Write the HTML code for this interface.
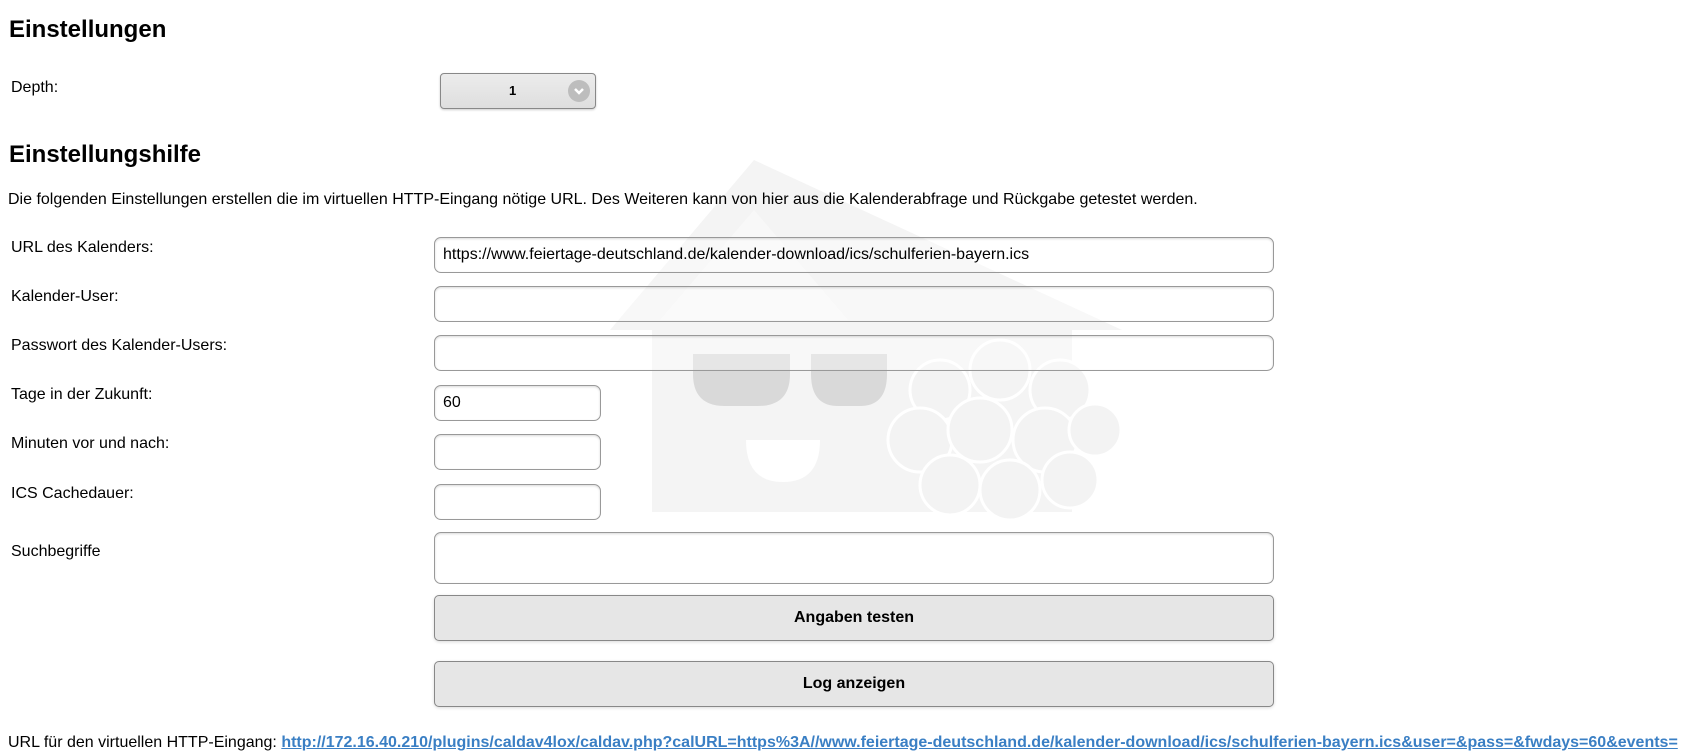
<!DOCTYPE html>
<html><head><meta charset="utf-8"><style>
html,body{margin:0;padding:0;background:#fff;width:1705px;height:753px;overflow:hidden;font-family:"Liberation Sans",Arial,sans-serif;color:#000;}
.a{position:absolute;white-space:nowrap;}
h2{margin:0;font-size:24px;font-weight:bold;position:absolute;left:9px;}
.lbl{position:absolute;left:11px;font-size:16px;line-height:20px;}
.inp{position:absolute;left:434px;width:830px;height:34px;border:1px solid #999;border-radius:7px;box-shadow:inset 0 1px 2px rgba(0,0,0,.15);background:rgba(255,255,255,.35);font-size:16px;line-height:34px;padding-left:8px;box-sizing:content-box;}
.sh{width:157px;}
.btn{position:absolute;left:434px;width:838px;height:44px;border:1px solid #888;border-radius:5px;background:#e6e6e6;box-shadow:0 1px 3px rgba(0,0,0,.15);font-weight:bold;font-size:16px;line-height:44px;text-align:center;}
</style></head><body>
<svg class="a" style="left:0;top:0" width="1705" height="753">
 <polygon points="754,160 610,330 652,330 652,512 1072,512 1072,330 1122,330" fill="#f4f4f4"/>
 <polygon points="754,210 660,320 848,320" fill="#f8f8f8"/>
 <path d="M693,354 h97 v20 q0,32 -32,32 h-33 q-32,0 -32,-32z" fill="#d9d9d9"/>
 <path d="M811,354 h76 v20 q0,32 -27,32 h-22 q-27,0 -27,-32z" fill="#d9d9d9"/>
 <path d="M746,440 h74 q0,42 -37,42 q-37,0 -37,-42z" fill="#fff"/>
 <g fill="#f3f3f3" stroke="#fff" stroke-width="3">
  <circle cx="1000" cy="370" r="30"/><circle cx="940" cy="390" r="30"/><circle cx="1060" cy="390" r="30"/>
  <circle cx="920" cy="440" r="32"/><circle cx="980" cy="430" r="32"/><circle cx="1045" cy="440" r="32"/><circle cx="1095" cy="430" r="26"/>
  <circle cx="950" cy="485" r="30"/><circle cx="1010" cy="490" r="30"/><circle cx="1070" cy="480" r="28"/>
 </g>
</svg>
<h2 style="top:16px">Einstellungen</h2>
<div class="lbl" style="top:78px">Depth:</div>
<div class="a" style="left:440px;top:73px;width:154px;height:34px;border:1px solid #888;border-radius:4px;background:linear-gradient(#ececec,#dedede);box-shadow:0 1px 2px rgba(0,0,0,.2);font-size:13px;font-weight:bold;line-height:34px;">
 <span style="position:absolute;left:68px;">1</span>
 <span style="position:absolute;right:5px;top:6px;width:22px;height:22px;border-radius:50%;background:#bdbdbd;"><svg width="22" height="22"><path d="M7,9 L11,13 L15,9" fill="none" stroke="#fff" stroke-width="2.5"/></svg></span>
</div>
<h2 style="top:141px">Einstellungshilfe</h2>
<div class="a" style="left:8px;top:190px;font-size:16px;line-height:20px;">Die folgenden Einstellungen erstellen die im virtuellen HTTP-Eingang nötige URL. Des Weiteren kann von hier aus die Kalenderabfrage und Rückgabe getestet werden.</div>

<div class="lbl" style="top:238px">URL des Kalenders:</div>
<div class="inp" style="top:237px">https://www.feiertage-deutschland.de/kalender-download/ics/schulferien-bayern.ics</div>
<div class="lbl" style="top:287px">Kalender-User:</div>
<div class="inp" style="top:286px"></div>
<div class="lbl" style="top:336px">Passwort des Kalender-Users:</div>
<div class="inp" style="top:335px"></div>
<div class="lbl" style="top:385px">Tage in der Zukunft:</div>
<div class="inp sh" style="top:385px">60</div>
<div class="lbl" style="top:434px">Minuten vor und nach:</div>
<div class="inp sh" style="top:434px"></div>
<div class="lbl" style="top:542px">Suchbegriffe</div>
<div class="inp" style="top:532px;height:50px"></div>
<div class="btn" style="top:595px">Angaben testen</div>
<div class="btn" style="top:661px">Log anzeigen</div>
<div class="lbl" style="top:484px">ICS Cachedauer:</div>
<div class="inp sh" style="top:484px"></div>
<div class="a" style="left:8px;top:733px;font-size:16px;line-height:20px;">URL für den virtuellen HTTP-Eingang: <a style="color:#3a7fc4;font-weight:bold;text-decoration:underline;">http://172.16.40.210/plugins/caldav4lox/caldav.php?calURL=https%3A//www.feiertage-deutschland.de/kalender-download/ics/schulferien-bayern.ics&amp;user=&amp;pass=&amp;fwdays=60&amp;events=</a></div>
</body></html>
